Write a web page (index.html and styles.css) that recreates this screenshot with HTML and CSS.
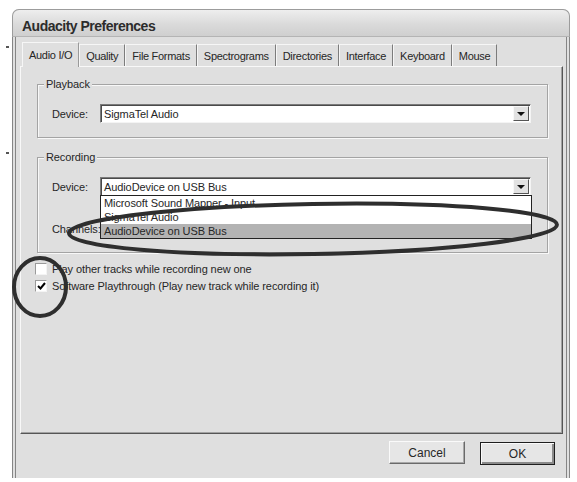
FILE: index.html
```html
<!DOCTYPE html>
<html>

<head>
    <title>Audacity Preferences</title>
    <link rel="stylesheet" href="styles.css">
</head>

<body>
    <div class="window">
        <div class="titlebar">Audacity Preferences</div>
        <div class="client">
            <div class="tabs">
                <div class="tab active">Audio I/O</div>
                <div class="tab">Quality</div>
                <div class="tab">File Formats</div>
                <div class="tab">Spectrograms</div>
                <div class="tab">Directories</div>
                <div class="tab">Interface</div>
                <div class="tab">Keyboard</div>
                <div class="tab">Mouse</div>
            </div>
            <div class="panel">
                <div class="group">
                    <span class="legend">Playback</span>
                    <div class="row">
                        <span class="label">Device:</span>
                        <div class="select">
                            <span class="value">SigmaTel Audio</span>
                            <span class="drop"><span class="arrow"></span></span>
                        </div>
                    </div>
                </div>

                <div class="group recording">
                    <span class="legend">Recording</span>
                    <div class="row">
                        <span class="label">Device:</span>
                        <div class="select">
                            <span class="value">AudioDevice on USB Bus</span>
                            <span class="drop"><span class="arrow"></span></span>
                            <ul class="list">
                                <li>Microsoft Sound Mapper - Input</li>
                                <li>SigmaTel Audio</li>
                                <li class="selected">AudioDevice on USB Bus</li>
                            </ul>
                        </div>
                    </div>
                    <div class="row channels">
                        <span class="label">Channels:</span>
                    </div>
                </div>

                <label class="check">
                    <span class="box"></span>
                    Play other tracks while recording new one
                </label>
                <label class="check">
                    <span class="box">
                        <svg width="9" height="8" viewBox="0 0 9 8"><path d="M1 4 L3.5 6.5 L8 1" fill="none" stroke="#000" stroke-width="2"/></svg>
                    </span>
                    Software Playthrough (Play new track while recording it)
                </label>
            </div>
            <div class="buttons">
                <button class="btn">Cancel</button>
                <button class="btn default">OK</button>
            </div>
        </div>
    </div>

    <!-- pen marks drawn over the screenshot -->
    <svg class="marks" width="577" height="482" viewBox="0 0 577 482">
        <ellipse cx="313" cy="229" rx="244" ry="25" transform="rotate(-1 313 229)" fill="none" stroke="#2e2e2e" stroke-width="4"/>
        <ellipse cx="40" cy="287" rx="26" ry="29" fill="none" stroke="#2e2e2e" stroke-width="4"/>
        <path d="M6 47 H9 M6 153 H9" stroke="#555" stroke-width="2"/>
    </svg>
</body>

</html>
```

FILE: styles.css
```css
body {
    margin: 0;
    background-color: #ffffff;
    font-family: "Liberation Sans", Arial, sans-serif;
    font-size: 11px;
    letter-spacing: -0.1px;
    color: #262626;
}

.window {
    margin: 9px 0 0 12px;
    width: 558px;
    height: 469px;
    display: flex;
    flex-direction: column;
    background-color: #dfdfdf;
    border-radius: 7px 7px 0 0;
}

.titlebar {
    height: 28px;
    box-sizing: border-box;
    padding: 6px 0 0 9px;
    display: flex;
    align-items: center;
    font-size: 14px;
    font-weight: bold;
    letter-spacing: -0.5px;
    color: #2c2c2c;
    background: linear-gradient(#eeeeee, #dadada 55%, #cfcfcf);
    border: 1px solid #9c9c9c;
    border-bottom-color: #b4b4b4;
    border-radius: 7px 7px 0 0;
}

.client {
    flex: 1;
    border-left: 4px double #858585;
    border-right: 4px double #858585;
    padding: 5px 3px 0 4px;
}

/* tabs */
.tabs {
    display: flex;
    align-items: flex-end;
    height: 24px;
    padding-left: 2px;
    letter-spacing: -0.3px;
}

.tab {
    height: 22px;
    box-sizing: border-box;
    padding: 0 6px;
    display: flex;
    align-items: center;
    border-top: 1px solid #f6f6f6;
    border-left: 1px solid #f6f6f6;
    border-right: 1px solid #7c7c7c;
}

.tab.active {
    height: 25px;
    margin-bottom: -1px;
    padding: 0 6px;
    position: relative;
    z-index: 1;
    background-color: #dfdfdf;
    border-right-color: #9a9a9a;
}

.panel {
    height: 368px;
    box-sizing: border-box;
    border-top: 1px solid #f8f8f8;
    border-left: 1px solid #f8f8f8;
    border-right: 1px solid #555555;
    border-bottom: 1px solid #555555;
    box-shadow: inset -1px -1px 0 #a2a2a2;
    padding: 17px 0 0 16px;
}

/* group boxes */
.group {
    width: 511px;
    box-sizing: border-box;
    border: 1px solid #a4a4a4;
    box-shadow: 1px 1px 0 #f8f8f8, inset 1px 1px 0 #f8f8f8;
    padding: 0 16px 14px 14px;
}

.group.recording {
    margin-top: 19px;
}

.legend {
    display: block;
    width: fit-content;
    margin: -8px 0 0 -8px;
    padding: 0 2px;
    line-height: 14px;
    background-color: #dfdfdf;
}

.row {
    display: flex;
    align-items: center;
    height: 19px;
    margin-top: 13px;
}

.row.channels {
    margin-top: 23px;
}

.label {
    width: 48px;
    flex-shrink: 0;
}

.select {
    flex: 1;
    height: 19px;
    box-sizing: border-box;
    position: relative;
    display: flex;
    align-items: center;
    background-color: #ffffff;
    border: 1px solid;
    border-color: #7a7a7a #f4f4f4 #f4f4f4 #7a7a7a;
    box-shadow: inset 1px 1px 0 #4a4a4a;
}

.value {
    flex: 1;
    padding-left: 3px;
}

.drop {
    width: 16px;
    height: 15px;
    box-sizing: border-box;
    margin-right: 1px;
    display: flex;
    align-items: center;
    justify-content: center;
    background-color: #e2e2e2;
    border: 1px solid;
    border-color: #f8f8f8 #555555 #555555 #f8f8f8;
}

.arrow {
    width: 0;
    height: 0;
    border-left: 4px solid transparent;
    border-right: 4px solid transparent;
    border-top: 4px solid #111111;
}

.list {
    position: absolute;
    top: 100%;
    left: -1px;
    width: calc(100% + 3px);
    box-sizing: border-box;
    margin: 0;
    padding: 0;
    list-style: none;
    background-color: #ffffff;
    border: 1px solid #222222;
    z-index: 2;
}

.list li {
    height: 14px;
    line-height: 14px;
    padding-left: 3px;
}

.list li.selected {
    background-color: #b3b3b3;
}

/* check boxes */
.check {
    display: flex;
    align-items: center;
    height: 17px;
    margin-left: -2px;
}

.group.recording + .check {
    margin-top: 7px;
}

.box {
    width: 12px;
    height: 12px;
    box-sizing: border-box;
    margin-right: 5px;
    display: flex;
    align-items: center;
    justify-content: center;
    background-color: #ffffff;
    border: 1px solid;
    border-color: #9a9a9a #f4f4f4 #f4f4f4 #9a9a9a;
}

/* dialog buttons */
.buttons {
    display: flex;
    justify-content: flex-end;
    gap: 15px;
    margin: 7px 8px 0 0;
}

.btn {
    width: 76px;
    height: 23px;
    font-family: inherit;
    font-size: 12px;
    color: #262626;
    background-color: #e6e6e6;
    border: 1px solid;
    border-color: #fafafa #6a6a6a #6a6a6a #fafafa;
    box-shadow: inset -1px -1px 0 #a8a8a8;
    padding: 0;
}

.btn.default {
    width: 75px;
    margin-top: 1px;
    border: 1px solid #1e1e1e;
    box-shadow: inset 1px 1px 0 #fafafa, inset -2px -2px 0 #8a8a8a;
}

.marks {
    position: absolute;
    top: 0;
    left: 0;
    z-index: 3;
    pointer-events: none;
}
```
